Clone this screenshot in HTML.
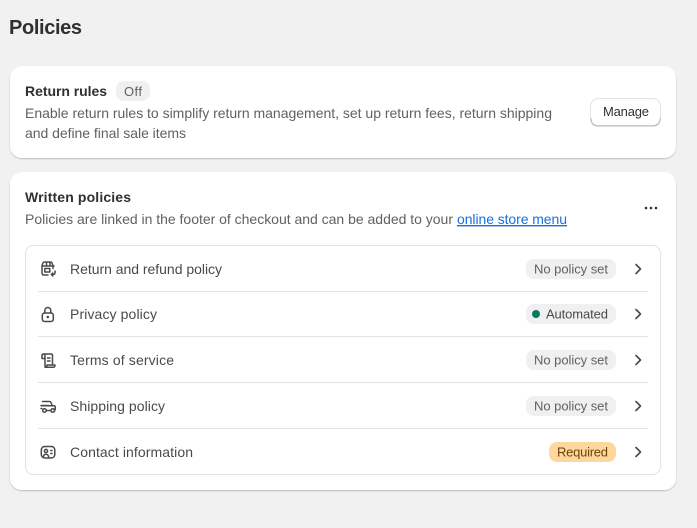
<!DOCTYPE html>
<html><head><meta charset="utf-8"><style>
html,body{margin:0;padding:0;background:#f1f1f1;width:697px;height:528px;overflow:hidden}
svg{display:block}
text{font-family:"Liberation Sans",Arial,sans-serif;font-size:14px;fill:#616161}
.b{font-weight:700;fill:#303030}
.r{fill:#4a4a4a}
.s{font-size:13px}
.i{fill:none;stroke:#4a4a4a;stroke-width:1.5;stroke-linecap:round;stroke-linejoin:round}
.c{fill:none;stroke:#4a4a4a;stroke-width:1.6;stroke-linecap:round;stroke-linejoin:round}
</style></head><body>
<svg width="697" height="528" viewBox="0 0 697 528" xmlns="http://www.w3.org/2000/svg">
<defs><filter id="s" x="-5%" y="-10%" width="110%" height="120%"><feDropShadow dx="0" dy="1" stdDeviation="0.7" flood-color="#000" flood-opacity="0.22"/></filter></defs>
<rect width="697" height="528" fill="#f1f1f1"/>
<text x="9" y="34" class="b" style="font-size:20px" textLength="73" lengthAdjust="spacing">Policies</text>

<rect x="10" y="66" width="666" height="92" rx="12" fill="#fff" filter="url(#s)"/>
<text x="25" y="96" class="b" style="font-size:14px" textLength="82" lengthAdjust="spacing">Return rules</text>
<rect x="116" y="81" width="34" height="20" rx="8" fill="#f0f0f0"/>
<text x="124" y="96" class="s" textLength="18" lengthAdjust="spacing">Off</text>
<text x="25" y="118" textLength="527" lengthAdjust="spacing">Enable return rules to simplify return management, set up return fees, return shipping</text>
<text x="25" y="138" textLength="161" lengthAdjust="spacing">and define final sale items</text>
<rect x="590.500" y="98.500" width="70" height="27" rx="8" fill="#fff" stroke="#e3e3e3"/>
<path d="M591 118v1.500a6.500 6.500 0 0 0 6.500 6.500h56a6.500 6.500 0 0 0 6.500-6.500V118" fill="none" stroke="#b5b5b5"/>
<text x="603" y="116" style="fill:#303030;font-size:13px" textLength="46" lengthAdjust="spacing">Manage</text>

<rect x="10" y="172" width="666" height="318" rx="12" fill="#fff" filter="url(#s)"/>
<text x="25" y="202" class="b" style="font-size:14px" textLength="106" lengthAdjust="spacing">Written policies</text>
<text x="25" y="224" textLength="428" lengthAdjust="spacing">Policies are linked in the footer of checkout and can be added to your</text>
<text x="457" y="224" style="fill:#1a6fdf;text-decoration:underline" textLength="110" lengthAdjust="spacing">online store menu</text>
<circle cx="646" cy="208" r="1.300" fill="#303030"/><circle cx="651" cy="208" r="1.300" fill="#303030"/><circle cx="656" cy="208" r="1.300" fill="#303030"/>

<rect x="25.500" y="245.500" width="635" height="229" rx="8" fill="#fff" stroke="#e3e3e3"/>
<g fill="#e3e3e3"><rect x="38" y="291" width="610" height="1"/><rect x="38" y="336" width="610" height="1"/><rect x="38" y="382" width="610" height="1"/><rect x="38" y="428" width="610" height="1"/></g>

<text x="70" y="274" class="r" textLength="152" lengthAdjust="spacing">Return and refund policy</text>
<text x="70" y="319" class="r" textLength="87" lengthAdjust="spacing">Privacy policy</text>
<text x="70" y="365" class="r" textLength="104" lengthAdjust="spacing">Terms of service</text>
<text x="70" y="411" class="r" textLength="95" lengthAdjust="spacing">Shipping policy</text>
<text x="70" y="457" class="r" textLength="123" lengthAdjust="spacing">Contact information</text>

<!-- return icon -->
<path class="i" d="M48 275h-4q-2 0-2-2v-7.500l1-2.500q.4-1 1.500-1h6q1.100 0 1.500 1l1 2.500v3M42 266h12M46.500 262v4M50 262v4"/>
<rect class="i" x="44.800" y="268.500" width="5" height="3.500"/>
<path class="i" d="M55 271v1.500q0 2-2 2h-1.500M52.800 273l-1.500 1.500 1.500 1.500"/>
<!-- lock -->
<rect class="i" x="42.300" y="313" width="11" height="8.500" rx="2.200"/>
<path class="i" d="M44.800 313v-2.500a3 3 0 0 1 6 0v2.500"/>
<circle cx="47.800" cy="317" r="1.300" fill="#4a4a4a"/>
<!-- scroll -->
<path class="i" d="M45 365v-9q0-2-1.500-2h7.500q1.500 0 1.500 1.500V364M43.500 354q-1.500 0-1.500 1.500v3h3M47.500 358h2.500M47.500 361h2.500M45 365q0 2.300 2 2.300h6q2 0 2-2.300h-8q0 2.300-2 2.300"/>
<!-- truck -->
<path class="i" d="M42.500 401.500h7q1 0 1.500 1l1.200 3.200h1.800q1.200 0 1.200 1.300v2.800h-1M41 405.500h7.500M41 408.500h.8M47 410.500h3.500M52.200 405.700h-11"/>
<circle class="i" cx="44.500" cy="410.500" r="1.800"/><circle class="i" cx="52.800" cy="410.500" r="1.800"/>
<!-- contact -->
<rect class="i" x="41.300" y="446.500" width="13.500" height="11.500" rx="3.500"/>
<circle cx="46" cy="451" r="1.600" class="i"/>
<path class="i" d="M43.300 457q.5-2.700 2.700-2.700t2.700 2.700M50.800 450.500h1.200M50.800 453.500h1.200"/>

<!-- badges -->
<g fill="#f0f0f0">
<rect x="526" y="259" width="90" height="20" rx="8"/>
<rect x="526" y="304" width="90" height="20" rx="8"/>
<rect x="526" y="350" width="90" height="20" rx="8"/>
<rect x="526" y="396" width="90" height="20" rx="8"/>
</g>
<rect x="549" y="442" width="67" height="20" rx="8" fill="#ffd79d"/>
<text x="534" y="273.500" class="s" textLength="74" lengthAdjust="spacing">No policy set</text>
<circle cx="536" cy="314" r="4" fill="#047b5d"/>
<text x="546" y="318.500" class="s" textLength="62" lengthAdjust="spacing" style="fill:#4a4a4a">Automated</text>
<text x="534" y="364.500" class="s" textLength="74" lengthAdjust="spacing">No policy set</text>
<text x="534" y="410.500" class="s" textLength="74" lengthAdjust="spacing">No policy set</text>
<text x="557" y="456.500" class="s" textLength="51" lengthAdjust="spacing" style="fill:#6b4408">Required</text>

<!-- chevrons -->
<path class="c" d="M636 264.500l4.500 4.500-4.500 4.500"/>
<path class="c" d="M636 309.500l4.500 4.500-4.500 4.500"/>
<path class="c" d="M636 355.500l4.500 4.500-4.500 4.500"/>
<path class="c" d="M636 401.500l4.500 4.500-4.500 4.500"/>
<path class="c" d="M636 447.500l4.500 4.500-4.500 4.500"/>
</svg>
</body></html>
